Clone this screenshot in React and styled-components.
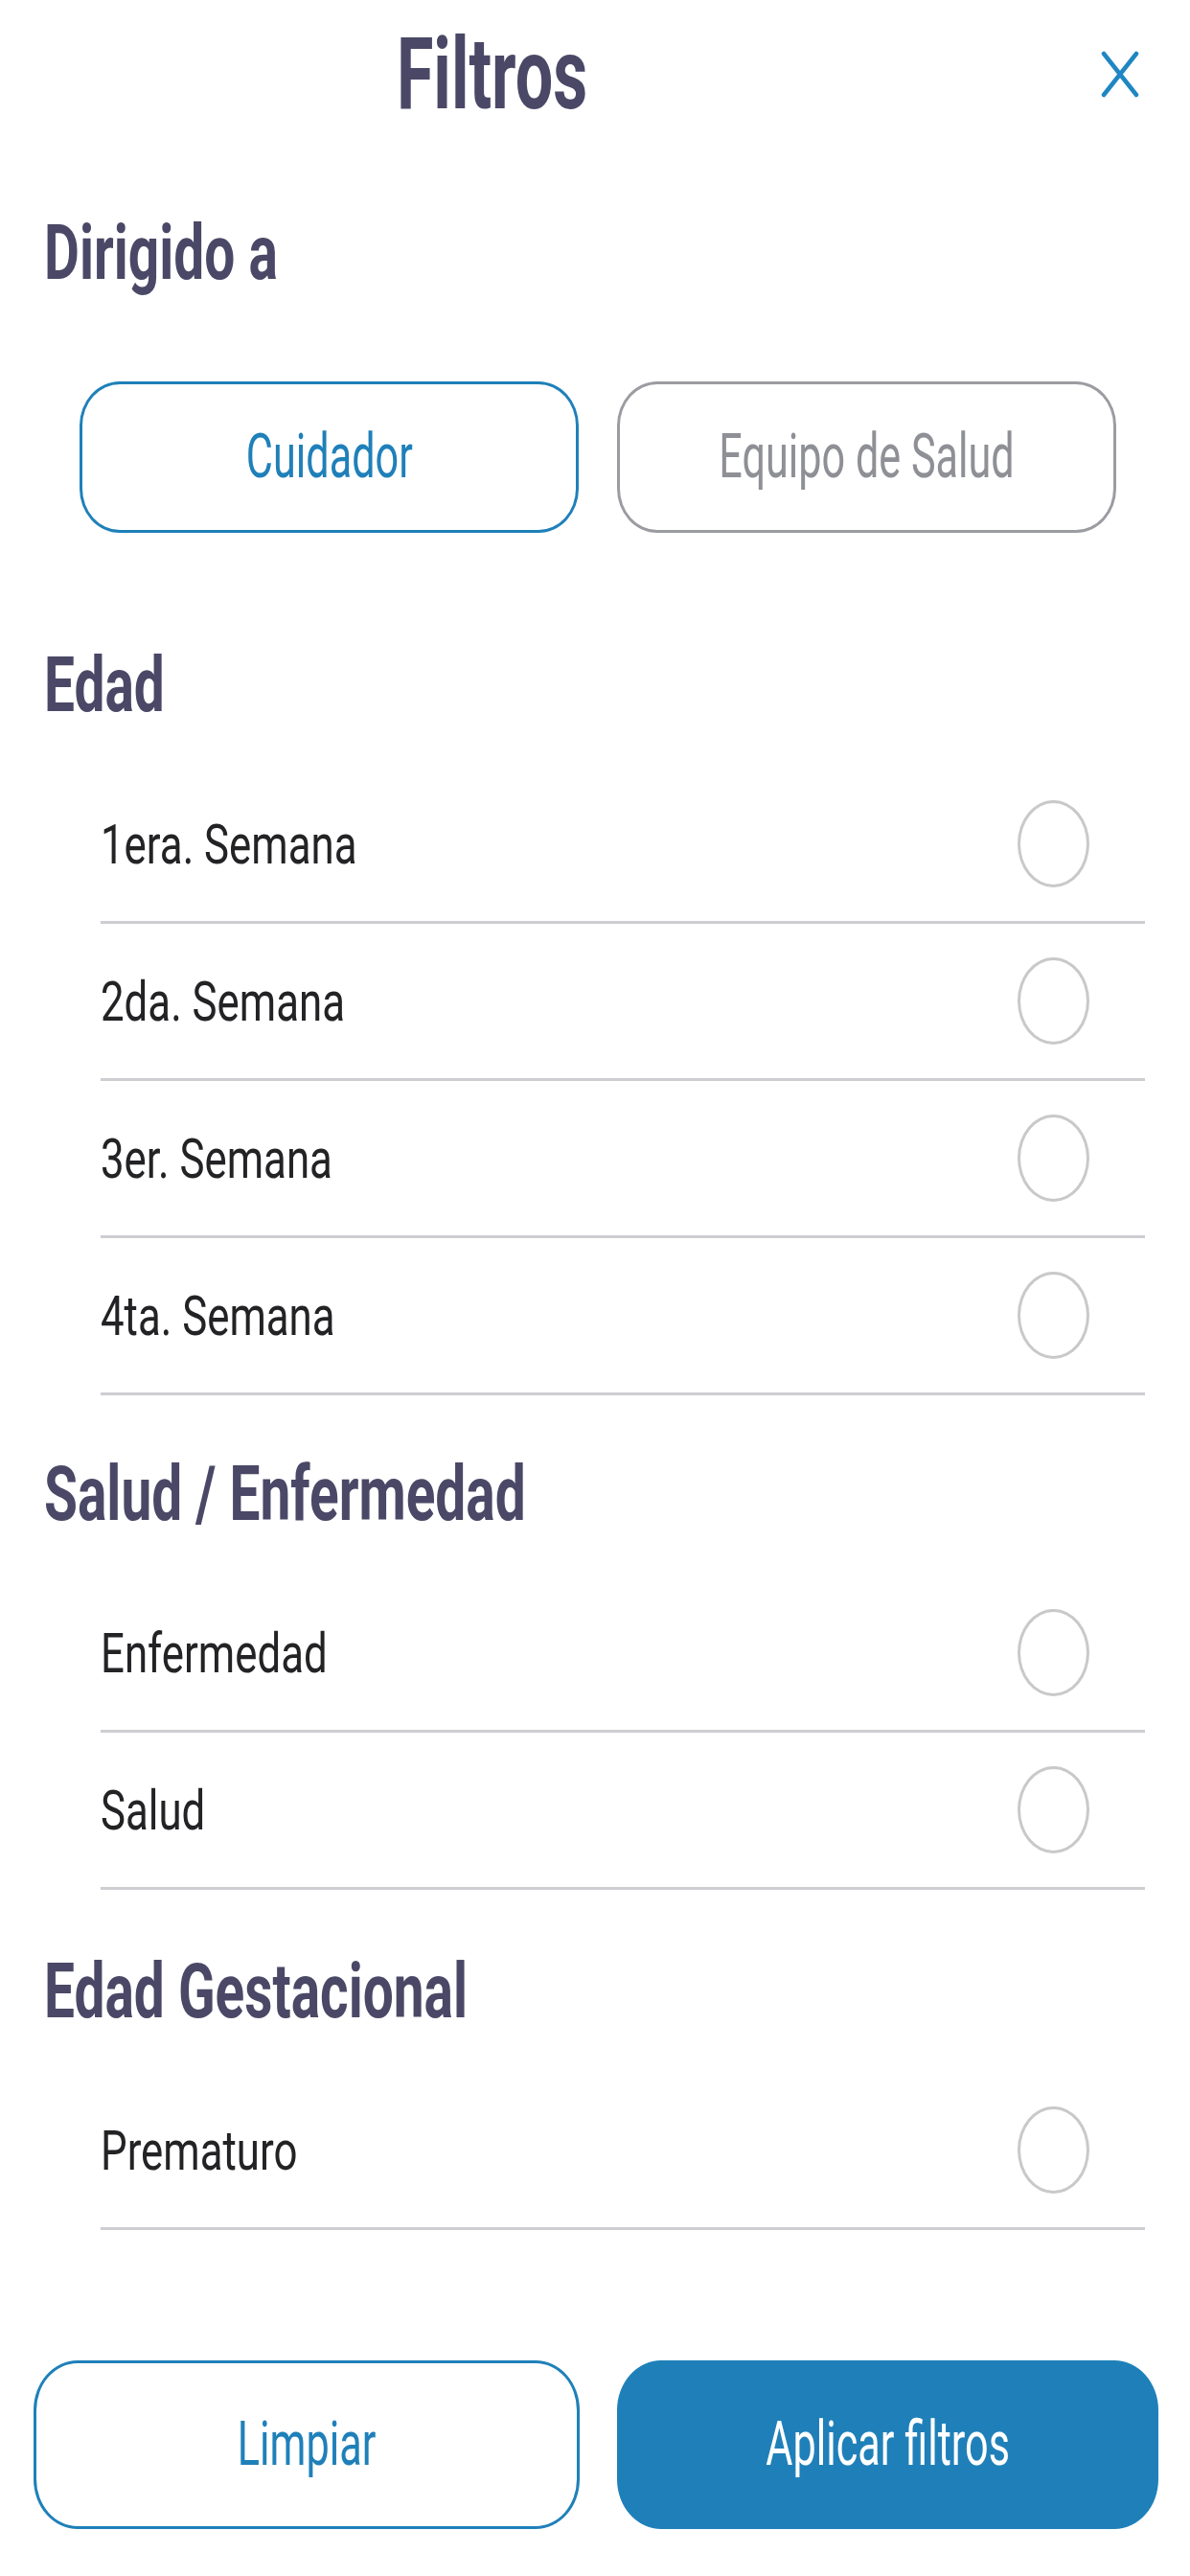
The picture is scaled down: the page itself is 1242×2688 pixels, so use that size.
import React from "react";
import styled, { createGlobalStyle } from "styled-components";

const Global = createGlobalStyle`
  html, body { margin: 0; padding: 0; background: #ffffff; }
  body { font-family: Roboto, "Liberation Sans", sans-serif; }
  * { box-sizing: border-box; }
`;

const INK = "#4a4866";
const BLUE = "#1f80b9";

const Page = styled.div`
  width: 1242px;
  height: 2688px;
  background: #fff;
  display: flex;
  flex-direction: column;
  overflow: hidden;
`;

const Header = styled.header`
  height: 155px;
  display: grid;
  grid-template-columns: 1028px 1fr;
  align-items: center;
`;

const Title = styled.h1`
  margin: 0;
  justify-self: center;
  font-size: 103px;
  line-height: 155px;
  font-weight: 700;
  color: ${INK};
  white-space: nowrap;
  transform: scaleX(0.68);
  transform-origin: center;
`;

const CloseButton = styled.button`
  justify-self: end;
  margin-right: 53px;
  width: 40px;
  height: 49px;
  padding: 0;
  border: 0;
  background: none;
  display: flex;
  cursor: pointer;
`;

const Heading = styled.h2`
  margin: ${(p) => p.$top}px 0 0 46px;
  font-size: 80px;
  line-height: 100px;
  font-weight: 700;
  color: ${INK};
  white-space: nowrap;
  transform: scaleX(0.71);
  transform-origin: left center;
`;

const ToggleRow = styled.div`
  margin-top: 84.5px;
  padding: 0 77px 0 83px;
  display: grid;
  grid-template-columns: 1fr 1fr;
  gap: 40px;
`;

const Pill = styled.button`
  height: 158px;
  border-radius: 42px / 46px;
  background: ${(p) => (p.$filled ? BLUE : "#fff")};
  border: 3px solid ${(p) => (p.$tone === "muted" ? "#9b9ca1" : BLUE)};
  color: ${(p) =>
    p.$filled ? "#fff" : p.$tone === "muted" ? "#8e9096" : BLUE};
  display: flex;
  align-items: center;
  justify-content: center;
  padding: 0;
  font-family: inherit;
  cursor: pointer;
`;

const PillText = styled.span`
  display: inline-block;
  font-size: 64px;
  line-height: 1;
  font-weight: 400;
  white-space: nowrap;
  transform: scaleX(0.675);
  transform-origin: center;
`;

const List = styled.ul`
  list-style: none;
  margin: ${(p) => p.$top}px 47px 0 105px;
  padding: 0;
`;

const Row = styled.li`
  height: 164px;
  border-bottom: 3px solid #cdcdd2;
  display: flex;
  align-items: center;
  justify-content: space-between;
`;

const Label = styled.span`
  display: inline-block;
  font-size: 58px;
  line-height: 1;
  color: #232326;
  white-space: nowrap;
  transform: scaleX(0.755);
  transform-origin: left center;
`;

const Radio = styled.span`
  width: 75px;
  height: 91px;
  margin-right: 58px;
  border: 3px solid #c9c9cb;
  border-radius: 50%;
  flex-shrink: 0;
`;

const Footer = styled.div`
  margin-top: 136px;
  padding: 0 33px 0 35px;
  display: grid;
  grid-template-columns: 570px 1fr;
  gap: 39px;
`;

const FooterPill = styled(Pill)`
  height: 176px;
  border-radius: 46px / 52px;
`;

const sections = [
  { title: "Edad", top: 109, items: ["1era. Semana", "2da. Semana", "3er. Semana", "4ta. Semana"] },
  { title: "Salud / Enfermedad", top: 53, items: ["Enfermedad", "Salud"] },
  { title: "Edad Gestacional", top: 56, items: ["Prematuro"] },
];

export default function App() {
  return (
    <Page>
      <Global />
      <Header>
        <Title>Filtros</Title>
        <CloseButton aria-label="Cerrar">
          <svg width="40" height="49" viewBox="0 0 40 49">
            <path
              d="M3 3 L37 46 M37 3 L3 46"
              stroke="#1f86c2"
              strokeWidth="4.5"
              strokeLinecap="round"
              fill="none"
            />
          </svg>
        </CloseButton>
      </Header>

      <Heading $top={58.5}>Dirigido a</Heading>
      <ToggleRow>
        <Pill>
          <PillText>Cuidador</PillText>
        </Pill>
        <Pill $tone="muted">
          <PillText>Equipo de Salud</PillText>
        </Pill>
      </ToggleRow>

      {sections.map((s) => (
        <React.Fragment key={s.title}>
          <Heading $top={s.top}>{s.title}</Heading>
          <List $top={35}>
            {s.items.map((it) => (
              <Row key={it}>
                <Label>{it}</Label>
                <Radio />
              </Row>
            ))}
          </List>
        </React.Fragment>
      ))}

      <Footer>
        <FooterPill>
          <PillText>Limpiar</PillText>
        </FooterPill>
        <FooterPill $filled>
          <PillText>Aplicar filtros</PillText>
        </FooterPill>
      </Footer>
    </Page>
  );
}
